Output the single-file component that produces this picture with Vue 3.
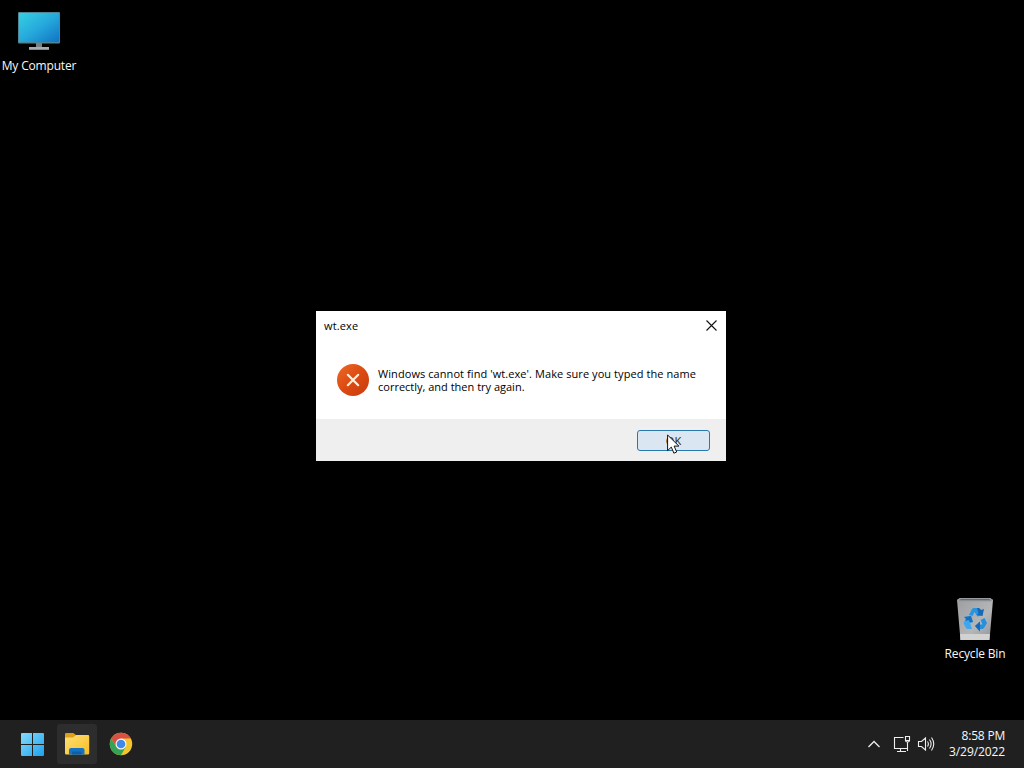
<template>
  <div class="screen">
    <main class="desktop">
      <div class="shortcut computer">
        <svg width="44" height="42" viewBox="0 0 44 42">
          <defs>
            <linearGradient id="monitor" x1="0" y1="0" x2="1" y2="1">
              <stop offset="0" stop-color="#35d0e2" />
              <stop offset="0.5" stop-color="#26a9dc" />
              <stop offset="1" stop-color="#1173c4" />
            </linearGradient>
          </defs>
          <rect x="1" y="2" width="42" height="31.5" rx="1" fill="#4d8795" />
          <rect x="2" y="3" width="40" height="29" fill="url(#monitor)" />
          <path d="M19 33h6v5h-6z" fill="#768087" />
          <path d="M12 37h20v2.8h-20z" fill="#a9adb0" />
        </svg>
        <span>My Computer</span>
      </div>

      <div class="shortcut bin">
        <svg width="38" height="44" viewBox="0 0 38 44">
          <defs>
            <linearGradient id="binBody" x1="0" y1="0" x2="1" y2="1">
              <stop offset="0" stop-color="#9b9da0" />
              <stop offset="0.6" stop-color="#b5b6b8" />
              <stop offset="1" stop-color="#919396" />
            </linearGradient>
          </defs>
          <path d="M1 3L4 1h30l3 2-3.5 40h-29z" fill="url(#binBody)" />
          <path d="M1 3l3-2h30l3 2-2 1.5H3z" fill="#999b9e" />
          <path d="M3 3.2l2-1.2h28l2 1.2z" fill="#696b6e" />
          <path d="M4.1 37h29.8l-.5 6h-29z" fill="#d2d2d3" />
          <path d="M13 18l3-6q.7-1 2-1h4.5l4 7-5 1.500-3-4.500-2 4z" fill="#2795e2" />
          <path d="M21 11h1.500q1.500 0 2.500 2l3-1-1.500 7-6-1 2-1.500z" fill="#1769b8" />
          <path d="M8 20l7-1 2 6-3 1 2 6h-4q-1.500 0-2.200-1.300L7.500 26l2-4z" fill="#3ba7ee" />
          <path d="M8 20l7-1 2 6-3 .5-1.500-2.500-3 1 .5-2.500z" fill="#176fc0" />
          <path d="M19 29l5-4.500v3h2.500l-2-4.500 4-2 2.500 5-3 5q-.8 1-2 1h-2v2.500z" fill="#2590e0" />
          <path d="M19 29l5-4.500v10z" fill="#1769b8" />
        </svg>
        <span>Recycle Bin</span>
      </div>

      <section class="dialog">
        <header class="titlebar">
          <span class="title">{{ title }}</span>
          <svg class="close" width="11" height="11" viewBox="0 0 11 11" stroke="#111" stroke-width="1.1">
            <path d="M.5 .5l10 10M10.5 .5l-10 10" />
          </svg>
        </header>
        <div class="body">
          <svg width="32" height="32" viewBox="0 0 32 32">
            <defs>
              <linearGradient id="error" x1="0" y1="0" x2="1" y2="1">
                <stop offset="0" stop-color="#ee6a28" />
                <stop offset="0.5" stop-color="#dc4a12" />
                <stop offset="1" stop-color="#c83b0d" />
              </linearGradient>
            </defs>
            <circle cx="16" cy="16" r="16" fill="url(#error)" />
            <path d="M10.8 10.8l10.400 10.400M21.200 10.800l-10.400 10.400" stroke="#fff0dc" stroke-width="2.2" stroke-linecap="round" />
          </svg>
          <p>
            <span class="line first">Windows cannot find 'wt.exe'. Make sure you typed the name</span>
            <span class="line">correctly, and then try again.</span>
          </p>
        </div>
        <footer class="actions">
          <button class="ok">OK</button>
        </footer>
      </section>

      <svg class="cursor" width="14" height="21" viewBox="0 0 14 21">
        <path d="M.6 1v15.6l3.7-3.5 2.6 6.1 2.8-1.200-2.600-5.900h4.800z" fill="#fff" stroke="#111" stroke-width="1" />
      </svg>
    </main>

    <footer class="taskbar">
      <nav class="apps">
        <div class="app">
          <svg width="24" height="24" viewBox="0 0 24 24">
            <defs>
              <linearGradient id="start" x1="0" y1="0" x2="24" y2="24" gradientUnits="userSpaceOnUse">
                <stop offset="0" stop-color="#86dcfc" />
                <stop offset="1" stop-color="#1ba0ee" />
              </linearGradient>
            </defs>
            <path d="M0 2q0-1 1-1h10v11H0zM12 1h10q1 0 1 1v10H12zM0 13h11v11H1q-1 0-1-1zM12 13h11v10q0 1-1 1H12z" fill="url(#start)" />
          </svg>
        </div>
        <div class="app active">
          <svg width="26" height="24" viewBox="0 0 26 24">
            <defs>
              <linearGradient id="folder" x1="0" y1="0" x2="1" y2="1">
                <stop offset="0" stop-color="#ffe077" />
                <stop offset="1" stop-color="#f8bd22" />
              </linearGradient>
            </defs>
            <path d="M1 2.300q0-1.300 1.300-1.300h7L12 3l-2 3.500H1z" fill="#dda016" />
            <path d="M1 5.600h8L12 3h12q1.200 0 1.200 1.200v17.100q0 1.200-1.200 1.200H2.200q-1.200 0-1.200-1.200z" fill="url(#folder)" />
            <path d="M5 22.500V18q0-2 2-2h11.500q2 0 2 2v4.500z" fill="#1474c4" />
            <path d="M8 22.500v-2.300q0-.8.8-.8h8q.8 0 .8.800v2.300z" fill="#0c5fa8" />
          </svg>
        </div>
        <div class="app">
          <svg width="24" height="24" viewBox="0 0 24 24">
            <circle cx="12" cy="12" r="11.200" fill="#f5c52c" />
            <path d="M2.300 6.400A11.200 11.200 0 0 1 21.700 6.400H12L7.200 14.800z" fill="#d95045" />
            <path d="M2.300 6.400A11.200 11.200 0 0 0 12 23.200L16.800 14.800H7.200z" fill="#35a355" />
            <circle cx="12" cy="12" r="5.500" fill="#f4f6f8" />
            <circle cx="12" cy="12" r="4.300" fill="#4288e8" />
          </svg>
        </div>
      </nav>
      <div class="tray">
        <svg width="14" height="8" viewBox="0 0 14 8" fill="none" stroke="#eee" stroke-width="1.3">
          <path d="M1.500 7l5.500-5.500L12.500 7" />
        </svg>
        <svg class="network" width="18" height="18" viewBox="0 0 18 18" fill="none" stroke="#eee" stroke-width="1.1">
          <path d="M10.500 2.500h-9v11H14M7.500 13.500v3M4 16.500h9M12.500 1.500h4v4h-4zM12.500 5.500q0 1.500 2 1.500t2-1.500M14.500 7v9" />
        </svg>
        <svg class="volume" width="18" height="16" viewBox="0 0 18 16" fill="none" stroke="#eee" stroke-width="1.1">
          <path d="M1.500 5.500h3l4-3.500v12l-4-3.500h-3zM10.500 5.500q1.800 2.500 0 5M12.500 3.500q3.200 4.500 0 9M14.500 1.500q4.500 6.500 0 13" />
        </svg>
        <div class="clock">
          <span class="time">8:58 PM</span>
          <span class="date">3/29/2022</span>
        </div>
      </div>
    </footer>
  </div>
</template>

<script setup>
import { ref } from 'vue';

const title = ref('wt.exe');
</script>

<style>
body {
  background: #000;
  overflow: hidden;
}
</style>

<style scoped>
.screen {
  display: flex;
  flex-direction: column;
  width: 1024px;
  height: 768px;
  background: #000;
  font-family: "Open Sans", "Noto Sans", sans-serif;
}

.desktop {
  position: relative;
  flex: 1;
}

.shortcut {
  position: absolute;
  display: flex;
  flex-direction: column;
  align-items: center;
  width: 80px;
  color: #f8f8f8;
  font-size: 12px;
  line-height: 16px;
  letter-spacing: -0.17px;
  white-space: nowrap;
}
.computer {
  left: -1px;
  top: 10px;
  gap: 6px;
}
.bin {
  left: 935px;
  top: 597px;
  gap: 5px;
}

.dialog {
  position: absolute;
  left: 316px;
  top: 311px;
  display: flex;
  flex-direction: column;
  box-sizing: border-box;
  width: 410px;
  height: 150px;
  background: #fff;
  color: #000;
  font-size: 11px;
}
.titlebar {
  display: flex;
  justify-content: space-between;
  align-items: center;
  height: 29px;
  padding: 0 9px 0 8px;
}
.title {
  letter-spacing: 0.15px;
}
.close {
  margin-bottom: 1px;
}
.body {
  display: flex;
  flex: 1;
  gap: 9px;
  padding: 24px 0 0 21px;
}
.body p {
  margin: 3px 0 0;
}
.line {
  display: block;
  line-height: 13px;
  white-space: nowrap;
}
.first {
  letter-spacing: 0.075px;
}

.actions {
  display: flex;
  justify-content: flex-end;
  align-items: center;
  height: 42px;
  padding-right: 16px;
  background: #efefef;
}
.ok {
  width: 73px;
  height: 21px;
  padding: 0;
  border: 1px solid #2878ad;
  border-radius: 3px;
  background: #dae7f2;
  color: #222;
  font: 11px "Open Sans", sans-serif;
}
.cursor {
  position: absolute;
  left: 667px;
  top: 434px;
}

.taskbar {
  display: flex;
  justify-content: space-between;
  height: 48px;
  background: #202020;
}
.apps {
  display: flex;
  align-items: center;
  gap: 4px;
  padding-left: 13px;
}
.app {
  display: flex;
  justify-content: center;
  align-items: center;
  width: 40px;
  height: 40px;
  border-radius: 3px;
}
.active {
  background: #2d2d2d;
}

.tray {
  display: flex;
  align-items: center;
  padding-right: 19px;
}
.network {
  margin-left: 12px;
}
.volume {
  margin-left: 6px;
}
.clock {
  display: flex;
  flex-direction: column;
  align-items: flex-end;
  width: 70px;
  color: #f8f8f8;
  font-size: 12px;
  line-height: 16px;
}
.time {
  letter-spacing: -0.2px;
}
.date {
  letter-spacing: -0.1px;
}
</style>
